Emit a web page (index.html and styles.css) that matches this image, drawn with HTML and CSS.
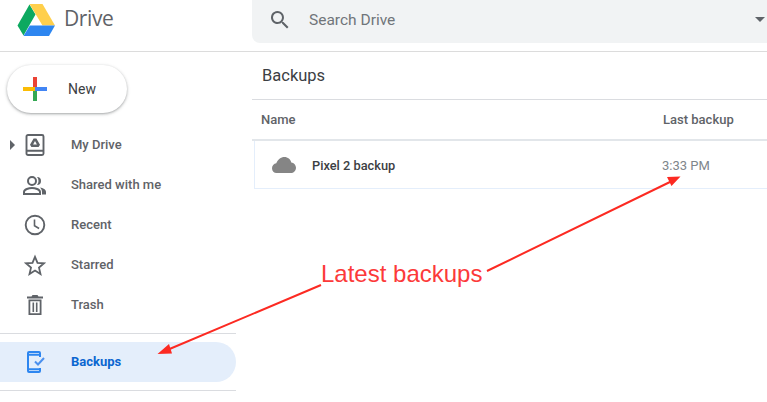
FILE: index.html
```html
<!DOCTYPE html>
<html lang="en">
<head>
<meta charset="utf-8">
<title>Drive</title>
<link rel="stylesheet" href="styles.css">
</head>
<body>
<div class="app">
  <header class="topbar">
    <div class="brand">
      <svg class="logo" viewBox="0 0 38 34" width="38" height="34">
        <path d="M12.500 2.500 L0.500 23.500 L6.500 33.500 L18.500 12.500Z" fill="#0da960"/>
        <path d="M12.500 2 H25.500 L38 23.500 H25.500Z" fill="#ffcf4b"/>
        <path d="M6.500 34 L12.800 23.500 H38 L32 34Z" fill="#2d86f0"/>
      </svg>
      <span class="brand-name">Drive</span>
    </div>
    <div class="search">
      <svg class="search-icon" viewBox="0 0 24 24" width="24" height="24"><path d="M15.500 14h-.8l-.3-.3A6.500 6.500 0 1 0 13.700 14.400l.3.3v.8l5 5 1.500-1.500zm-6 0a4.500 4.500 0 1 1 0-9 4.500 4.500 0 0 1 0 9z" fill="#5f6368"/></svg>
      <span class="search-text">Search Drive</span>
      <span class="caret"></span>
    </div>
  </header>
  <div class="body">
    <aside class="sidebar">
      <button class="new-btn">
        <svg viewBox="0 0 24 24" width="24" height="24" class="new-plus">
          <rect x="10" y="0" width="4" height="12" fill="#ea4335"/>
          <rect x="0" y="10" width="12" height="4" fill="#fbbc05"/>
          <rect x="12" y="10" width="12" height="4" fill="#4285f4"/>
          <rect x="10" y="14" width="4" height="10" fill="#34a853"/>
        </svg>
        <span>New</span>
      </button>
      <nav class="nav">
        <div class="nav-item">
          <span class="tree-caret"></span>
          <svg class="nav-icon" viewBox="0 0 20 22" width="20" height="22"><path d="M3 1h14a1.500 1.500 0 0 1 1.500 1.500v17a1.500 1.500 0 0 1-1.500 1.500H3a1.500 1.500 0 0 1-1.500-1.500v-17A1.500 1.500 0 0 1 3 1zM1.500 16.800h17" fill="none" stroke="#5f6368" stroke-width="1.900"/><path d="M8.600 4.500h2.800l3.600 6.300-1.400 2.200H6.400L5 10.800zM10 7l-1.900 3.500h3.800z" fill="#5f6368" fill-rule="evenodd"/></svg>
          <span>My Drive</span>
        </div>
        <div class="nav-item">
          <svg class="nav-icon" viewBox="0 0 24 20" width="24" height="20"><circle cx="9" cy="6" r="4" fill="none" stroke="#5f6368" stroke-width="2"/><path d="M1 19v-2c0-2.800 5-4 8-4s8 1.200 8 4v2z" fill="none" stroke="#5f6368" stroke-width="2"/><path d="M14 2a4 4 0 0 1 0 8 6 6 0 0 0 0-8zM17 12.500c3 .6 6 1.800 6 4.500v2.500h-4V17c0-1.800-.8-3.300-2-4.500z" fill="#5f6368"/></svg>
          <span>Shared with me</span>
        </div>
        <div class="nav-item">
          <svg class="nav-icon" viewBox="0 0 22 22" width="22" height="22"><circle cx="11" cy="11" r="9.300" fill="none" stroke="#5f6368" stroke-width="1.900"/><path d="M10.500 5.500v6.300l4.600 2.700" fill="none" stroke="#5f6368" stroke-width="1.600"/></svg>
          <span>Recent</span>
        </div>
        <div class="nav-item">
          <svg class="nav-icon" viewBox="0 0 22 22" width="22" height="22"><path d="M11 2.800l2.500 6 6.500.5-5 4.300 1.500 6.400-5.500-3.400-5.500 3.400 1.500-6.400-5-4.300 6.500-.5z" fill="none" stroke="#5f6368" stroke-width="1.800" stroke-linejoin="miter"/></svg>
          <span>Starred</span>
        </div>
        <div class="nav-item">
          <svg class="nav-icon" viewBox="0 0 16 20" width="16" height="20"><path d="M5.500 0h5l1 1.500H16v2H0v-2h4.500zM1.500 4.500h13V20h-13zM3.300 6.300v11.900h9.400V6.300zM5.500 7.500h1.600v9.500H5.500zM8.900 7.500h1.600v9.500H8.900z" fill="#5f6368" fill-rule="evenodd"/></svg>
          <span>Trash</span>
        </div>
      </nav>
      <div class="side-rule rule-a"></div>
      <div class="nav-item active">
        <svg class="nav-icon" viewBox="0 0 14 22" width="14" height="22"><path d="M13 6V2a1 1 0 0 0-1-1H2a1 1 0 0 0-1 1v18a1 1 0 0 0 1 1h10a1 1 0 0 0 1-1v-3M1 3.800h12M1 18.300h12" fill="none" stroke="#2d86f0" stroke-width="2"/></svg>
        <svg class="check-icon" viewBox="0 0 11 9" width="11" height="9"><path d="M1 4.500l3 3 6-6.500" fill="none" stroke="#4b90ee" stroke-width="2"/></svg>
        <span>Backups</span>
      </div>
      <div class="side-rule rule-b"></div>
    </aside>
    <main class="main">
      <h1 class="title">Backups</h1>
      <div class="table-head">
        <span class="col-name">Name</span>
        <span class="col-date">Last backup</span>
      </div>
      <div class="row">
        <svg class="cloud" viewBox="0 0 24 16" width="24" height="16"><path d="M12.500 0c3.300 0 6 2.300 6.800 5.400 2.700.3 4.700 2.600 4.700 5.300 0 3-2.400 5.300-5.300 5.300H4.500C2 16 0 14 0 11.200 0 8.700 1.800 6.600 4.300 6.200 5.700 2.600 8.800 0 12.500 0z" fill="#858585"/></svg>
        <span class="row-name">Pixel 2 backup</span>
        <span class="row-date">3:33 PM</span>
      </div>
    </main>
  </div>
  <svg class="arrows" viewBox="0 0 767 402" width="767" height="402">
    <path d="M321 285 L166 350.500 M487 271 L672 181" fill="none" stroke="#fc2a22" stroke-width="2"/>
    <path d="M157.500 354 L169 344 L172 353.500Z M680.500 176.500 L667 177 L671.500 186Z" fill="#fc2a22"/>
  </svg>
  <div class="callout">Latest backups</div>
</div>
</body>
</html>
```
FILE: styles.css
```css
* { box-sizing: border-box; }
html, body { margin: 0; padding: 0; background: #fff; }
body { width: 767px; height: 402px; overflow: hidden; font-family: Roboto, "Liberation Sans", sans-serif; }
.app { position: relative; width: 767px; height: 402px; overflow: hidden; }
.topbar { display: flex; height: 52px; border-bottom: 1px solid #dcdcdc; }
.brand { width: 252px; display: flex; align-items: flex-start; padding: 2px 0 0 17px; }
.logo { flex: none; }
.brand-name { margin-left: 9px; margin-top: 1px; font: 400 21px/30px "Open Sans", sans-serif; color: #5f6368; letter-spacing: -0.4px; }
.search { flex: 1; height: 43px; background: #f1f3f4; border-bottom-left-radius: 8px; display: flex; align-items: center; padding-left: 16px; position: relative; }
.search-icon { flex: none; margin-top: -4px; }
.search-text { margin-left: 17px; margin-top: -4px; font: 400 15.500px/20px Roboto, sans-serif; color: #70757a; }
.caret { position: absolute; right: 2px; top: 17px; width: 0; height: 0; border-left: 5px solid transparent; border-right: 5px solid transparent; border-top: 5px solid #5f6368; }
.body { display: flex; }
.sidebar { width: 252px; flex: none; padding-top: 13px; }
.new-btn { display: flex; align-items: center; width: 120px; height: 48px; margin-left: 7px; padding: 0 0 0 16px; border: 0; background: #fff; border-radius: 24px; box-shadow: 0 1px 2px rgba(60,64,67,.3), 0 1px 3px 1px rgba(60,64,67,.15); font: 400 14px/20px Roboto, sans-serif; color: #3c4043; }
.new-plus { flex: none; margin-right: 21px; }
.nav { margin-top: 12px; }
.nav-item { position: relative; height: 40px; display: flex; align-items: center; padding-left: 71px; font: 500 13px/16px Roboto, sans-serif; color: #5f6368; }
.nav-icon { position: absolute; left: 35px; top: 50%; transform: translate(-50%, -50%); }
.tree-caret { position: absolute; left: 10px; top: 15px; width: 0; height: 0; border-top: 5px solid transparent; border-bottom: 5px solid transparent; border-left: 5px solid #5f6368; }
.side-rule { width: 236px; height: 1px; background: #dadce0; }
.rule-a { margin-top: 8px; }
.rule-b { margin-top: 8px; }
.active { width: 236px; margin-top: 8px; background: #e4eefb; border-radius: 0 20px 20px 0; color: #0b66d0; font-weight: 700; }
.active .nav-icon { left: 34px; }
.check-icon { position: absolute; left: 34px; top: 15px; }
.main { flex: 1; min-width: 0; }
.title { margin: 0; height: 48px; padding: 13px 0 0 10px; font: 400 16.500px/22px Roboto, sans-serif; color: #3c4043; border-bottom: 1px solid #dadce0; }
.table-head { display: flex; height: 41px; align-items: center; padding-left: 9px; font: 500 13px/16px Roboto, sans-serif; color: #5f6368; border-bottom: 2px solid #e2e6ea; }
.col-name { width: 402px; }
.row { display: flex; align-items: center; height: 48px; margin-left: 2px; padding-left: 17px; border: 1px solid #e4eefb; border-top: 0; border-right: 0; font: 12.800px/16px Roboto, sans-serif; }
.cloud { flex: none; }
.row-name { width: 350px; margin-left: 16px; margin-top: 2px; font-weight: 500; color: #3c4043; }
.row-date { color: #80868b; font-size: 13px; font-weight: 400; margin-top: 2px; }
.arrows { position: absolute; left: 0; top: 0; pointer-events: none; }
.callout { position: absolute; left: 321px; top: 260px; font: 400 24px/28px "Liberation Sans", sans-serif; color: #fc3a3a; white-space: nowrap; }
```
